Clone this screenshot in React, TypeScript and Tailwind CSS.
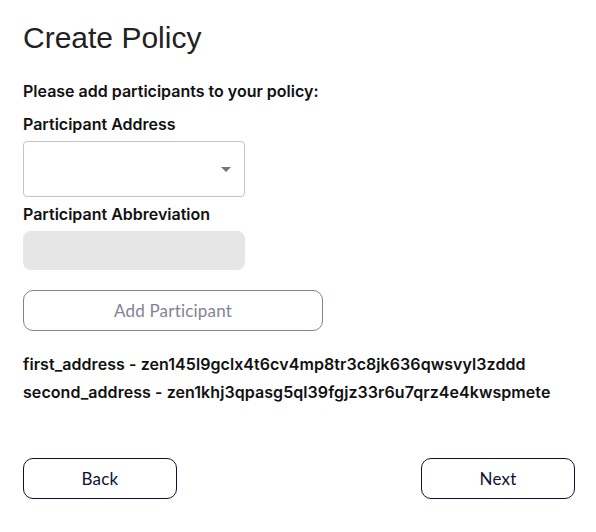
export default function App() {
  const participants = [
    { name: 'first_address', address: 'zen145l9gclx4t6cv4mp8tr3c8jk636qwsvyl3zddd' },
    { name: 'second_address', address: 'zen1khj3qpasg5ql39fgjz33r6u7qrz4e4kwspmete' }
  ]

  return (
    <div className="w-[596px] h-[532px] bg-white pl-[23px] pr-[21px] pt-[20px] font-['Inter',sans-serif] text-[#111]">
      {/* Header */}
      <h1 className="text-[30px] leading-[36px] text-[#222] font-normal font-['Liberation_Sans',sans-serif]">Create Policy</h1>

      <p className="mt-[25px] text-[16px] leading-[20px] font-semibold">Please add participants to your policy:</p>

      {/* Address select */}
      <label className="block mt-[13px] text-[16px] leading-[20px] font-semibold">Participant Address</label>
      <div className="mt-[7px] w-[222px] h-[56px] rounded-[4px] border border-[#c4c4c4] flex items-center justify-end pr-[13px]">
        <svg width="10" height="5" viewBox="0 0 10 5">
          <path d="M0 0 L10 0 L5 5 Z" fill="#757575" />
        </svg>
      </div>

      {/* Abbreviation */}
      <label className="block mt-[7px] text-[16px] leading-[20px] font-semibold">Participant Abbreviation</label>
      <div className="mt-[7px] w-[222px] h-[39px] rounded-[8px] bg-[#e6e6e6]" />

      <button className="mt-[20px] w-[300px] h-[41px] rounded-[10px] border border-[#7d8391] text-[17px] tracking-[0.2px] text-[#7f8494] font-['Lato',sans-serif]">
        Add Participant
      </button>

      {/* Participants */}
      <div className="mt-[23px] flex flex-col gap-[8px]">
        {participants.map(p => (
          <p key={p.name} className="text-[16px] leading-[20px] font-semibold tracking-[0.07px]">
            {p.name} - {p.address}
          </p>
        ))}
      </div>

      {/* Footer */}
      <div className="mt-[56px] flex justify-between">
        <button className="w-[154px] h-[41px] rounded-[10px] border border-[#0c1234] text-[17px] tracking-[0.2px] text-[#0c1234] font-['Lato',sans-serif]">
          Back
        </button>
        <button className="w-[154px] h-[41px] rounded-[10px] border border-[#0c1234] text-[17px] tracking-[0.2px] text-[#0c1234] font-['Lato',sans-serif]">
          Next
        </button>
      </div>
    </div>
  )
}
